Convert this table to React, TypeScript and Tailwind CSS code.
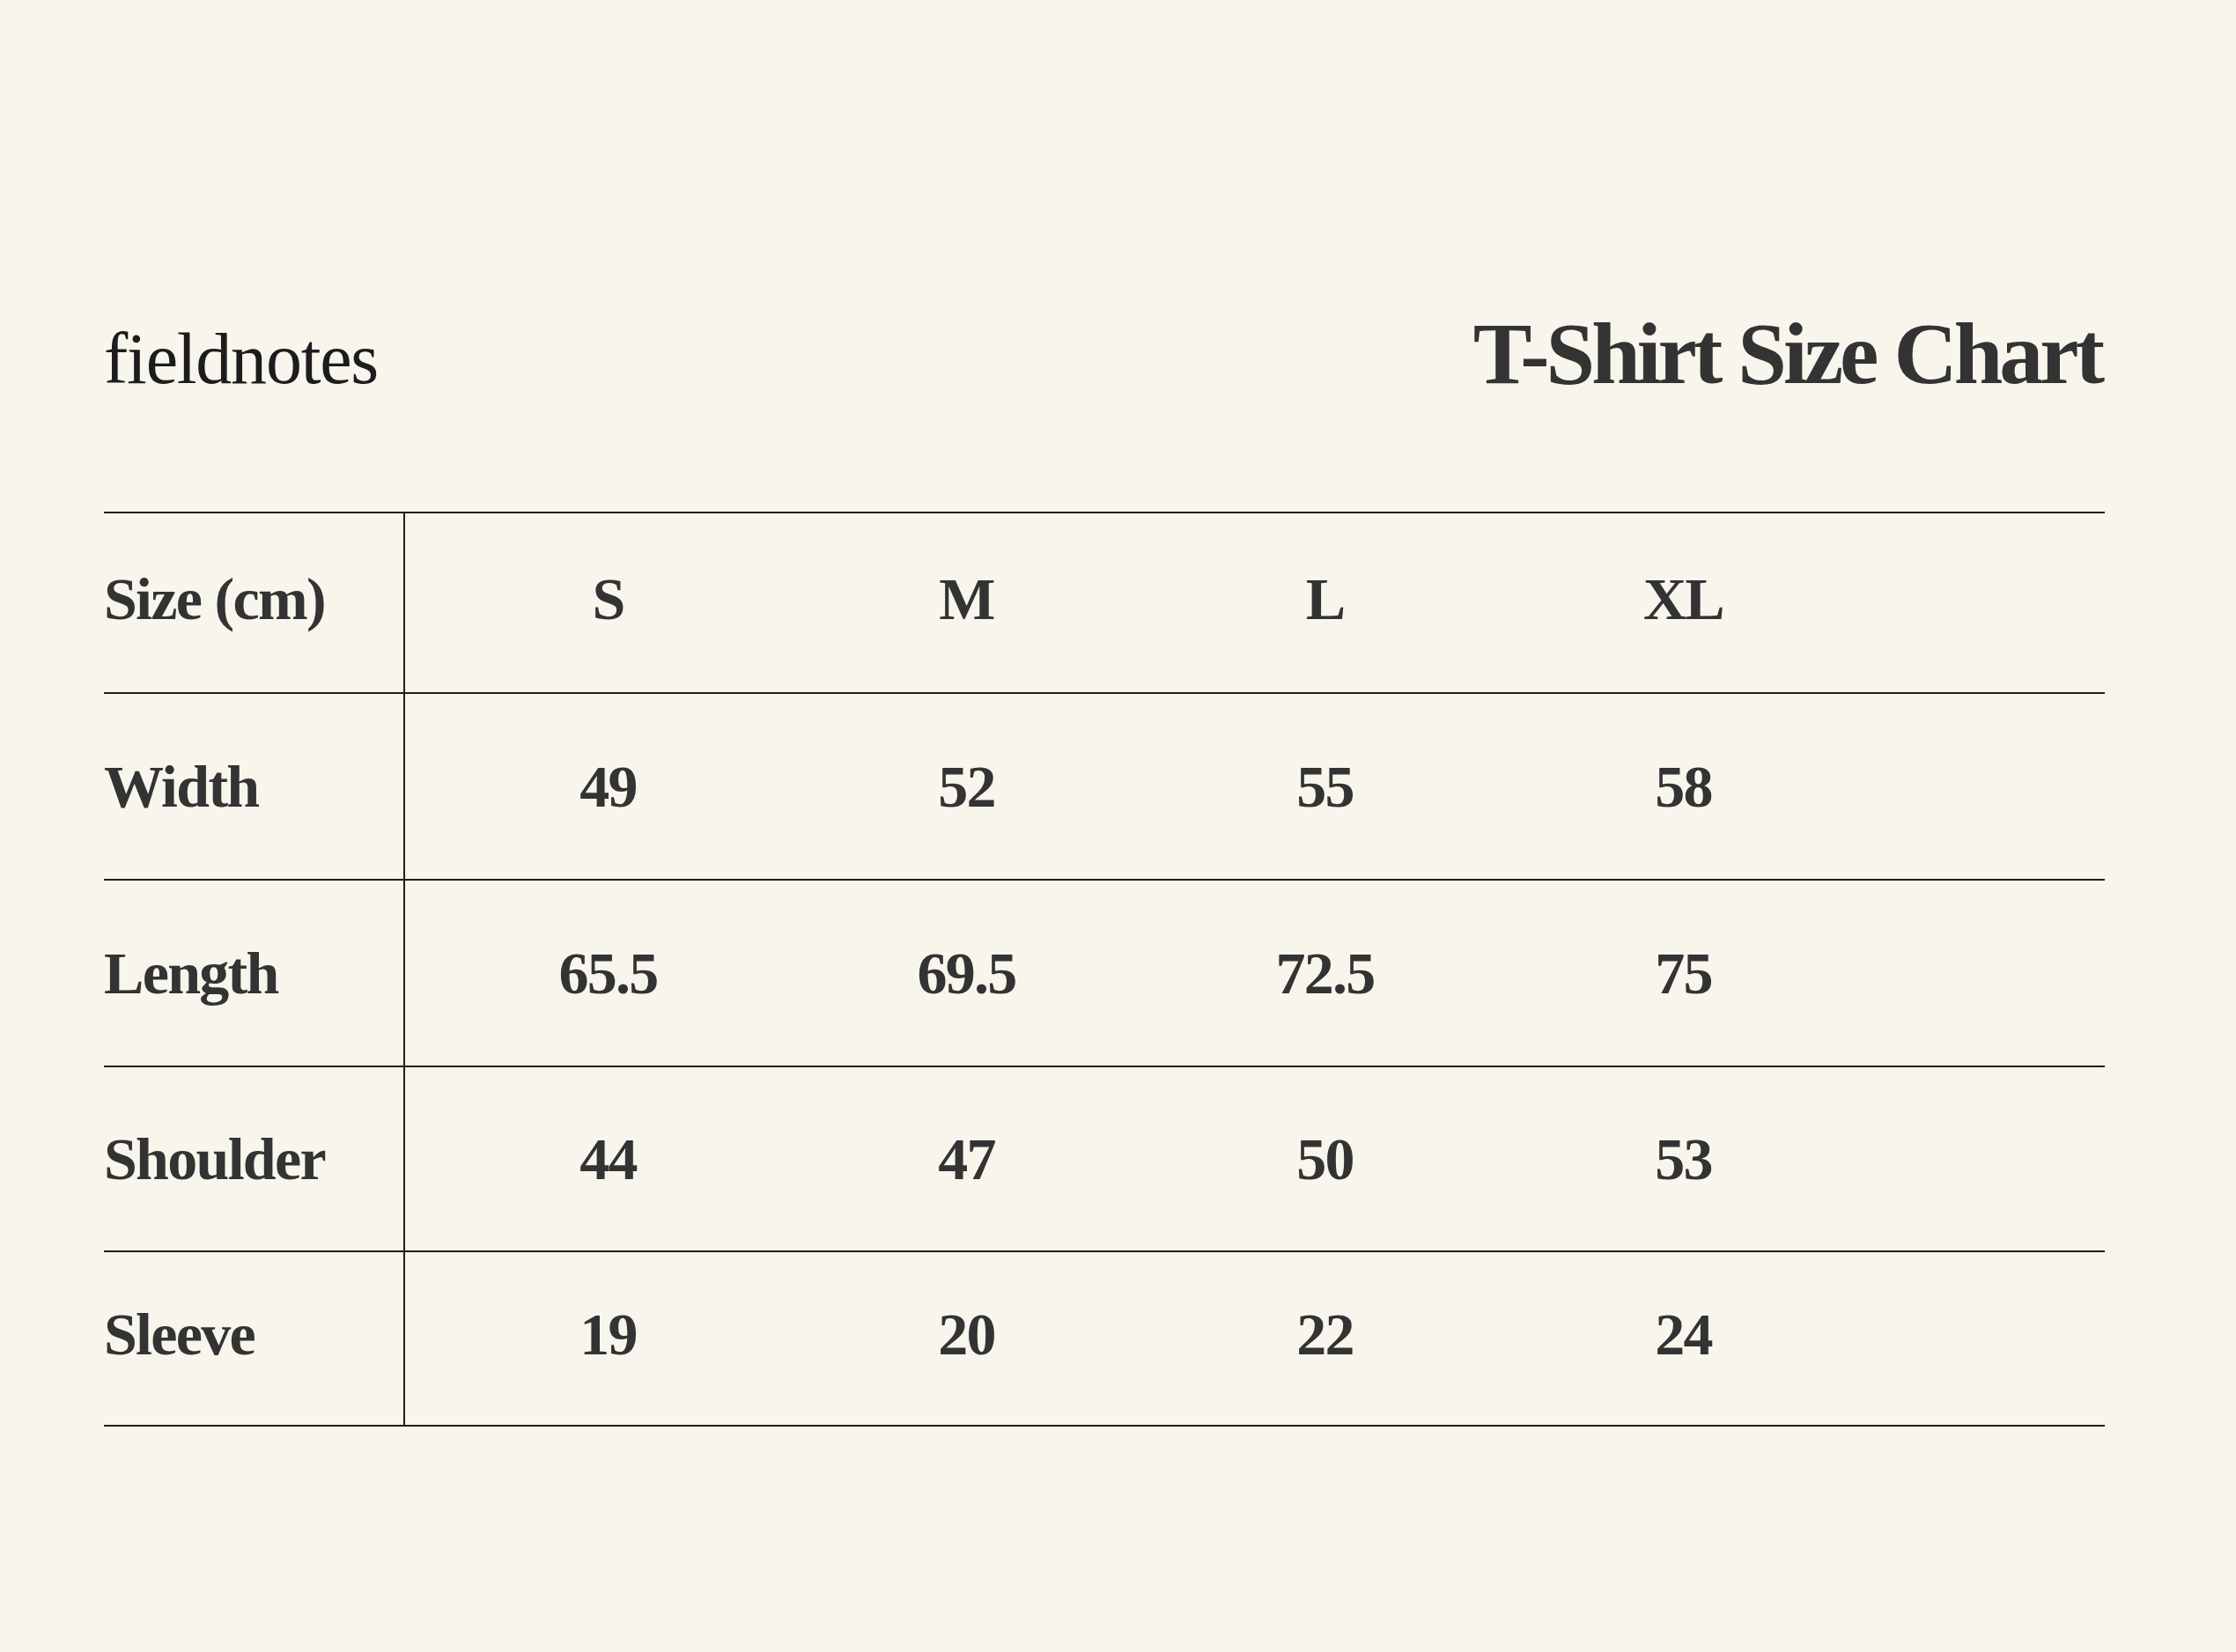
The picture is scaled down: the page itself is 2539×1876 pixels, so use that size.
import React from 'react';

interface SizeRow {
  label: string;
  values: string[];
  height: string;
  pad?: string;
}

const sizes = ['S', 'M', 'L', 'XL'];

const rows: SizeRow[] = [
  { label: 'Width', values: ['49', '52', '55', '58'], height: 'h-[212px]' },
  { label: 'Length', values: ['65.5', '69.5', '72.5', '75'], height: 'h-[212px]' },
  { label: 'Shoulder', values: ['44', '47', '50', '53'], height: 'h-[210px]' },
  { label: 'Sleeve', values: ['19', '20', '22', '24'], height: 'h-[198px]', pad: 'pb-[10px]' },
];

const ChartRow: React.FC<SizeRow> = ({ label, values, height, pad = '' }) => (
  <div className={`flex border-b-2 border-[#1e1e1e] ${height}`}>
    <div className={`w-[342px] shrink-0 flex items-center border-r-2 border-[#1e1e1e] ${pad}`}>
      <span className="leading-none">{label}</span>
    </div>
    <div className="flex pl-[27px]">
      {values.map((v, i) => (
        <div key={i} className={`w-[407px] flex items-center justify-center ${pad}`}>
          <span className="leading-none">{v}</span>
        </div>
      ))}
    </div>
  </div>
);

export default function App() {
  return (
    <div className="min-h-[1876px] w-full bg-[#f8f5ec] font-['Liberation_Serif',serif] text-[#333333]">
      <div className="pl-[118px] pr-[149px] pt-[352px]">
        <div className="flex items-baseline justify-between">
          <h2 className="text-[82px] leading-none font-normal tracking-[-0.015em] text-[#1c1c1c]">fieldnotes</h2>
          <h1 className="text-[100px] leading-none font-bold tracking-[-0.04em] mr-[4px] text-[#333333]">T-Shirt Size Chart</h1>
        </div>

        <div className="mt-[129px] border-t-2 border-[#1e1e1e] text-[68px] font-bold tracking-[-0.025em]">
          <ChartRow label="Size (cm)" values={sizes} height="h-[205px]" pad="pb-[10px]" />
          {rows.map((r) => (
            <ChartRow key={r.label} {...r} />
          ))}
        </div>
      </div>
    </div>
  );
}
